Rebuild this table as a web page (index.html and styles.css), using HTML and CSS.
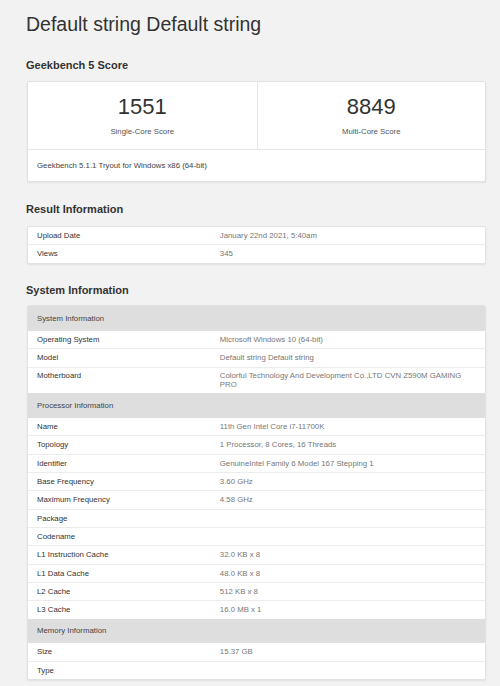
FILE: index.html
```html
<!DOCTYPE html>
<html>
<head>
<meta charset="utf-8">
<link rel="stylesheet" href="styles.css">
</head>
<body>
<div class="page">
  <h1 class="title">Default string Default string</h1>

  <h2 class="heading first">Geekbench 5 Score</h2>
  <div class="card">
    <div class="scores">
      <div class="score">
        <div class="score-num">1551</div>
        <div class="score-label">Single-Core Score</div>
      </div>
      <div class="score">
        <div class="score-num">8849</div>
        <div class="score-label">Multi-Core Score</div>
      </div>
    </div>
    <div class="card-foot">Geekbench 5.1.1 Tryout for Windows x86 (64-bit)</div>
  </div>

  <h2 class="heading">Result Information</h2>
  <div class="card">
    <div class="row"><div class="k">Upload Date</div><div class="v">January 22nd 2021, 5:40am</div></div>
    <div class="row"><div class="k">Views</div><div class="v">345</div></div>
  </div>

  <h2 class="heading sys">System Information</h2>
  <div class="card">
    <div class="group">System Information</div>
    <div class="row"><div class="k">Operating System</div><div class="v">Microsoft Windows 10 (64-bit)</div></div>
    <div class="row"><div class="k">Model</div><div class="v">Default string Default string</div></div>
    <div class="row tall"><div class="k">Motherboard</div><div class="v">Colorful Technology And Development Co.,LTD CVN Z590M GAMING PRO</div></div>
    <div class="group">Processor Information</div>
    <div class="row"><div class="k">Name</div><div class="v">11th Gen Intel Core i7-11700K</div></div>
    <div class="row"><div class="k">Topology</div><div class="v">1 Processor, 8 Cores, 16 Threads</div></div>
    <div class="row"><div class="k">Identifier</div><div class="v">GenuineIntel Family 6 Model 167 Stepping 1</div></div>
    <div class="row"><div class="k">Base Frequency</div><div class="v">3.60 GHz</div></div>
    <div class="row"><div class="k">Maximum Frequency</div><div class="v">4.58 GHz</div></div>
    <div class="row"><div class="k">Package</div><div class="v"></div></div>
    <div class="row"><div class="k">Codename</div><div class="v"></div></div>
    <div class="row"><div class="k">L1 Instruction Cache</div><div class="v">32.0 KB x 8</div></div>
    <div class="row"><div class="k">L1 Data Cache</div><div class="v">48.0 KB x 8</div></div>
    <div class="row"><div class="k">L2 Cache</div><div class="v">512 KB x 8</div></div>
    <div class="row"><div class="k">L3 Cache</div><div class="v">16.0 MB x 1</div></div>
    <div class="group">Memory Information</div>
    <div class="row"><div class="k">Size</div><div class="v">15.37 GB</div></div>
    <div class="row"><div class="k">Type</div><div class="v"></div></div>
  </div>
</div>
</body>
</html>
```

FILE: styles.css
```css
html, body {
  margin: 0;
  padding: 0;
  background: #f2f2f2;
  font-family: "Liberation Sans", Arial, sans-serif;
  color: #333;
}

.page {
  width: 459px;
  margin-left: 27px;
  padding-top: 13px;
  padding-bottom: 20px;
}

.title {
  margin: 0 0 0 -1px;
  font-size: 19.5px;
  line-height: 23px;
  font-weight: normal;
  color: #333;
}

.heading {
  margin: 21px 0 9.7px -1px;
  font-size: 11px;
  line-height: 13px;
  font-weight: bold;
  color: #333;
}

.heading.first {
  margin-top: 22.6px;
  margin-bottom: 9.4px;
}

.heading.sys {
  margin-top: 20.5px;
  margin-bottom: 8px;
}

.card {
  background: #fff;
  border: 1px solid #e2e2e2;
  border-radius: 2px;
  box-shadow: 0 1px 2px rgba(0, 0, 0, 0.08);
  overflow: hidden;
}

.scores {
  display: grid;
  grid-template-columns: 1fr 1fr;
  border-bottom: 1px solid #e6e6e6;
}

.score {
  text-align: center;
  padding: 12.3px 0 13.5px;
}

.score + .score {
  border-left: 1px solid #e6e6e6;
}

.score-num {
  font-size: 22px;
  line-height: 25px;
  color: #333;
}

.score-label {
  margin-top: 7.7px;
  font-size: 7.8px;
  line-height: 9px;
  color: #555;
}

.card-foot {
  padding: 11px 9px;
  font-size: 7.8px;
  line-height: 9px;
  color: #444;
}

.row {
  display: grid;
  grid-template-columns: 40% 1fr;
  font-size: 7.8px;
  line-height: 9.33px;
  border-top: 1px solid #ececec;
}

.card > .row:first-child {
  border-top: none;
}

.group + .row {
  border-top: none;
}

.row .k {
  padding: 4px 9px;
  color: #333;
}

.row .v {
  padding: 4px 8px 4px 9px;
  color: #777;
}

.row.tall {
  line-height: 8.9px;
}

.group {
  background: #dedede;
  color: #444;
  font-size: 7.8px;
  line-height: 9.33px;
  padding: 7.67px 9px;
}
```
